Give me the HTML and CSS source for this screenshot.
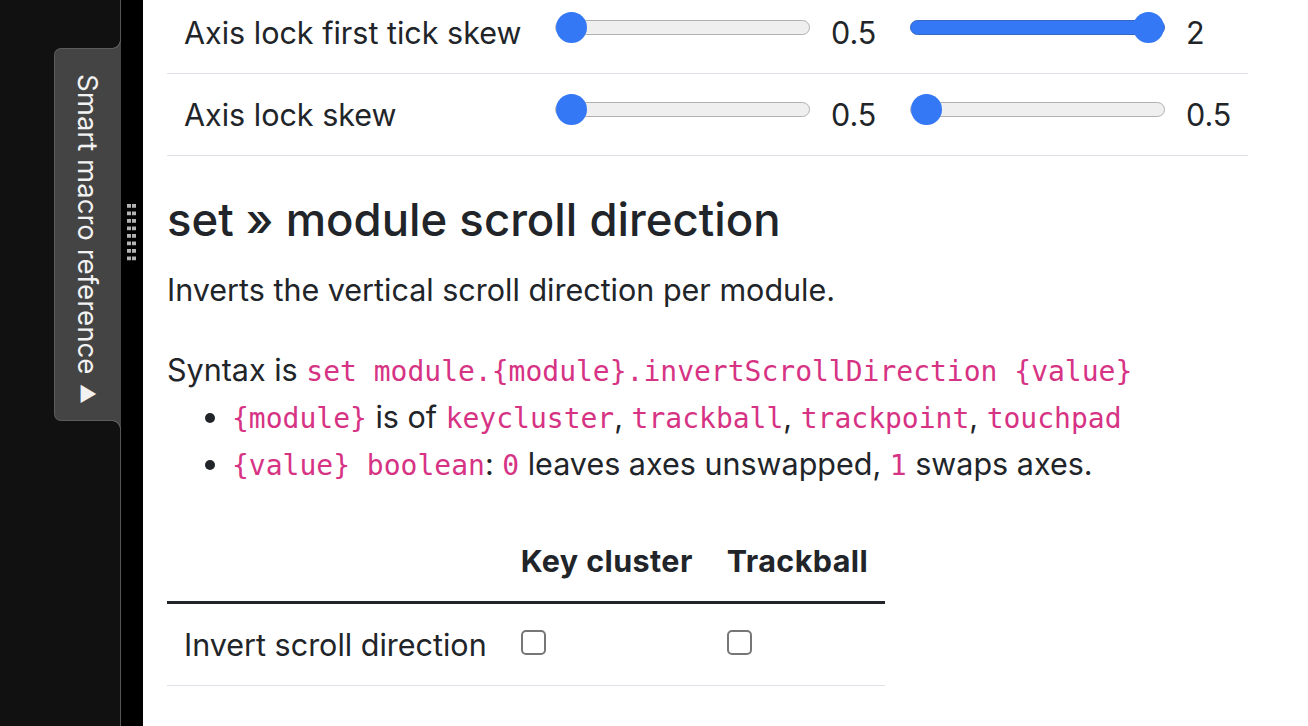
FILE: index.html
```html
<!DOCTYPE html>
<html>
<head>
<meta charset="utf-8">
<title>Smart macro reference</title>
<link rel="stylesheet" href="styles.css">
</head>
<body>
<aside class="sidebar">
    <div class="tab"><span class="tab-text">Smart macro reference <span class="arrow">▶</span></span></div>
</aside>
<div class="gutter"><div class="grip"></div></div>

<main class="content">
    <table class="settings">
        <tr>
            <td class="label">Axis lock first tick skew</td>
            <td class="slider"><input type="range" min="0.5" max="2" step="0.1" value="0.5"><span class="val">0.5</span></td>
            <td class="slider"><input type="range" class="full" min="0.5" max="2" step="0.1" value="2"><span class="val">2</span></td>
        </tr>
        <tr>
            <td class="label">Axis lock skew</td>
            <td class="slider"><input type="range" min="0.5" max="2" step="0.1" value="0.5"><span class="val">0.5</span></td>
            <td class="slider"><input type="range" min="0.5" max="2" step="0.1" value="0.5"><span class="val">0.5</span></td>
        </tr>
    </table>

    <h4>set » module scroll direction</h4>
    <p>Inverts the vertical scroll direction per module.</p>
    <p class="syntax">Syntax is <code>set module.{module}.invertScrollDirection {value}</code></p>
    <ul>
        <li><code>{module}</code> is of <code>keycluster</code>, <code>trackball</code>, <code>trackpoint</code>, <code>touchpad</code></li>
        <li><code>{value} boolean</code>: <code>0</code> leaves axes unswapped, <code>1</code> swaps axes.</li>
    </ul>

    <table class="modules">
        <thead>
            <tr>
                <th></th>
                <th>Key cluster</th>
                <th>Trackball</th>
            </tr>
        </thead>
        <tbody>
            <tr>
                <td>Invert scroll direction</td>
                <td><input type="checkbox"></td>
                <td><input type="checkbox"></td>
            </tr>
        </tbody>
    </table>
</main>
</body>
</html>
```

FILE: styles.css
```css
body {
  margin: 0;
  height: 100vh;
  display: flex;
  overflow: hidden;
  font-family: Inter, "Liberation Sans", sans-serif;
  color: #212529;
  background: #fff;
}

/* left panel with the folded tab */
.sidebar {
  width: 121px;
  flex: none;
  background: #111;
  border-right: 1px solid #555;
  box-sizing: border-box;
  padding-top: 48px;
}
.tab {
  position: relative;
  height: 373px;
  margin-left: 54px;
  margin-right: -1px;
  box-sizing: border-box;
  background: #444;
  border: 1px solid #5c5c5c;
  border-right: none;
  border-radius: 7px 0 0 7px;
  display: flex;
  justify-content: center;
  padding-top: 25px;
}
.tab::before,
.tab::after {
  content: "";
  position: absolute;
  right: 0;
  width: 9px;
  height: 9px;
}
.tab::before {
  top: -9px;
  background: radial-gradient(circle at 0 0, #111 7.5px, #5c5c5c 8px, #5c5c5c 8.6px, #444 9.2px);
}
.tab::after {
  bottom: -9px;
  background: radial-gradient(circle at 0 100%, #111 7.5px, #5c5c5c 8px, #5c5c5c 8.6px, #444 9.2px);
}
.tab-text {
  writing-mode: vertical-rl;
  font-size: 27.6px;
  color: #f2f2f2;
  white-space: nowrap;
}
.arrow {
  font-size: 20px;
}

.gutter {
  width: 22px;
  flex: none;
  background: #000;
}
.grip {
  width: 9px;
  height: 60px;
  margin: 204px 0 0 6px;
  background: conic-gradient(at 4px 3.5px, transparent 75%, #b4b4b4 0) 0 0 / 5px 7.5px;
}

/* main column */
.content {
  flex: 1;
  padding: 0 60px 0 24px;
  font-size: 30.5px;
  line-height: 47px;
  overflow: hidden;
}

.settings {
  width: 1081px;
  table-layout: fixed;
  border-collapse: collapse;
  margin: -8px 0 36px;
}
.settings td {
  padding: 17px;
  border-bottom: 1px solid #dee2e6;
  white-space: nowrap;
}
.settings .label {
  width: 337px;
}
.settings .slider {
  width: 321px;
}
.val {
  margin-left: 21px;
}

input[type=range] {
  -webkit-appearance: none;
  appearance: none;
  width: 255px;
  height: 31px;
  margin: 0;
  vertical-align: 1px;
  background: transparent;
}
input[type=range]::-webkit-slider-runnable-track {
  box-sizing: border-box;
  height: 15px;
  border: 1px solid #b1b1b1;
  border-radius: 8px;
  background: #efefef;
}
input[type=range].full::-webkit-slider-runnable-track {
  background: #3478f6;
  border-color: #3466c2;
}
input[type=range]::-webkit-slider-thumb {
  -webkit-appearance: none;
  width: 31px;
  height: 31px;
  margin-top: -9px;
  border: none;
  border-radius: 50%;
  background: #3478f6;
}

h4 {
  font-size: 45.5px;
  font-weight: 500;
  line-height: 56px;
  margin: 0 0 18px;
}
p {
  margin: 0 0 33px;
}
.syntax {
  margin: 0;
}
ul {
  margin: 0 0 33px;
  padding-left: 65px;
}
code {
  font-family: "DejaVu Sans Mono", "Liberation Mono", monospace;
  font-size: 28px;
  line-height: 1;
  color: #d63384;
}

.modules {
  border-collapse: collapse;
}
.modules th,
.modules td {
  padding: 17px;
  text-align: left;
  white-space: nowrap;
}
.modules th {
  font-weight: 700;
  letter-spacing: 0.4px;
  border-bottom: 3px solid #212529;
}
.modules td {
  border-bottom: 1px solid #dee2e6;
}
input[type=checkbox] {
  -webkit-appearance: none;
  appearance: none;
  width: 25px;
  height: 25px;
  margin: 0;
  vertical-align: 1px;
  border: 2px solid #767676;
  border-radius: 5px;
  background: #fff;
}
```
